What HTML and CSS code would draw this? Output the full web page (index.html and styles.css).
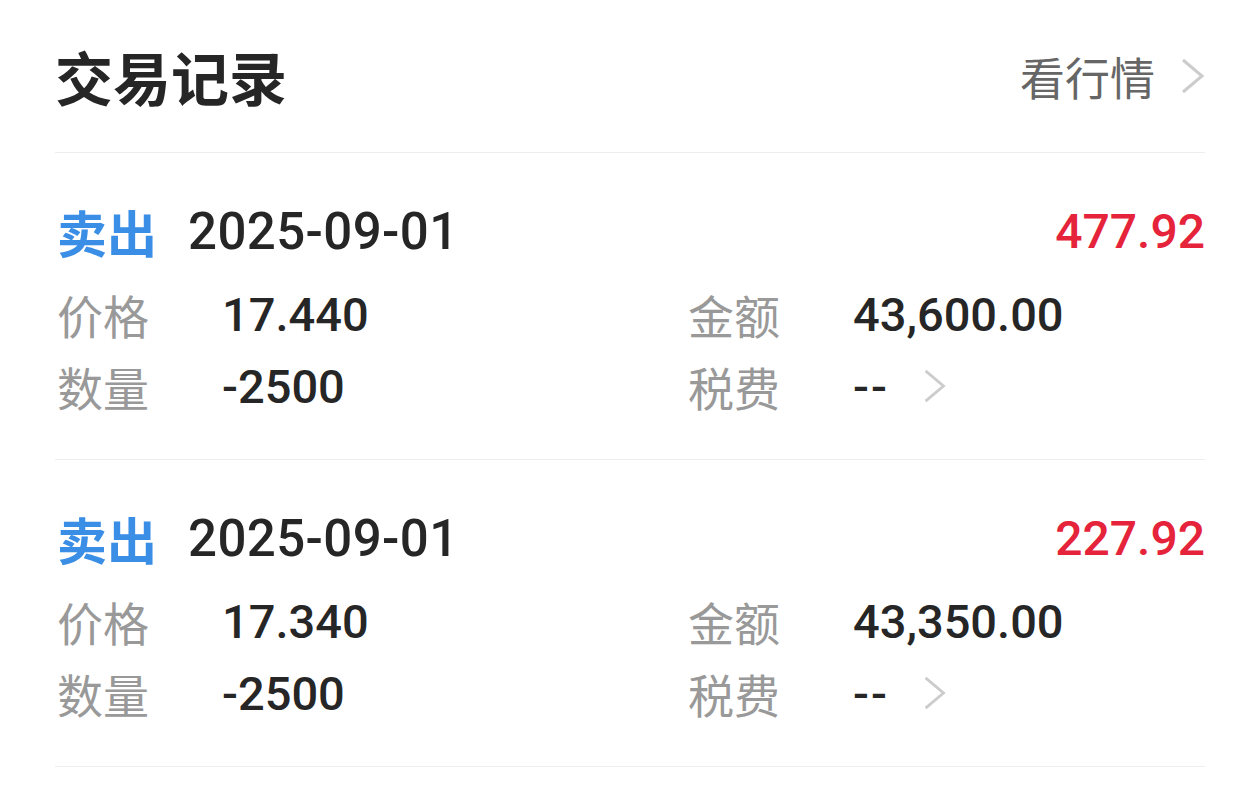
FILE: index.html
```html
<!DOCTYPE html>
<html lang="zh-CN">
<head>
    <meta charset="UTF-8">
    <meta name="viewport" content="width=device-width, initial-scale=1.0">
    <title>交易记录</title>
    <link rel="stylesheet" href="styles.css">
</head>
<body>
    <!-- Header -->
    <div class="header">
        <h1 class="title">交易记录</h1>
        <a href="#" class="more">
            <span>看行情</span>
            <svg class="chevron chevron-lg" viewBox="0 0 24 36"><path d="M2 2 L21 18 L2 34"/></svg>
        </a>
    </div>

    <!-- Trade list -->
    <div class="trade">
        <div class="trade-head">
            <span class="side">卖出</span>
            <span class="date">2025-09-01</span>
            <span class="profit">477.92</span>
        </div>
        <div class="trade-body">
            <div class="field"><span class="label">价格</span><span class="value">17.440</span></div>
            <div class="field"><span class="label">金额</span><span class="value">43,600.00</span></div>
            <div class="field"><span class="label">数量</span><span class="value">-2500</span></div>
            <div class="field"><span class="label">税费</span><span class="value fee">--</span>
                <svg class="chevron" viewBox="0 0 24 36"><path d="M2 2 L21 18 L2 34"/></svg>
            </div>
        </div>
    </div>

    <div class="trade">
        <div class="trade-head">
            <span class="side">卖出</span>
            <span class="date">2025-09-01</span>
            <span class="profit">227.92</span>
        </div>
        <div class="trade-body">
            <div class="field"><span class="label">价格</span><span class="value">17.340</span></div>
            <div class="field"><span class="label">金额</span><span class="value">43,350.00</span></div>
            <div class="field"><span class="label">数量</span><span class="value">-2500</span></div>
            <div class="field"><span class="label">税费</span><span class="value fee">--</span>
                <svg class="chevron" viewBox="0 0 24 36"><path d="M2 2 L21 18 L2 34"/></svg>
            </div>
        </div>
    </div>
</body>
</html>
```

FILE: styles.css
```css
body {
    margin: 0;
    padding: 0 55px;
    background-color: #fff;
    font-family: Roboto, "Noto Sans CJK SC", sans-serif;
    color: #262626;
}

/* Header */
.header {
    height: 152px;
    display: flex;
    align-items: center;
    justify-content: space-between;
    border-bottom: 1px solid #eeeeee;
}

.title {
    margin: 0;
    font-family: "Noto Sans CJK SC", sans-serif;
    font-size: 58px;
    font-weight: bold;
    line-height: 1;
    color: #262626;
}

.more {
    display: flex;
    align-items: center;
    gap: 26px;
    text-decoration: none;
    color: #666;
    font-family: "Noto Sans CJK SC", sans-serif;
    font-size: 45px;
}

.chevron {
    width: 24px;
    height: 34px;
    fill: none;
    stroke: #cccccc;
    stroke-width: 3;
}

.chevron-lg {
    height: 36px;
}

/* Trade rows */
.trade {
    padding: 48px 0 37px;
    border-bottom: 1px solid #eeeeee;
}

.trade-head {
    height: 60px;
    display: flex;
    align-items: center;
}

.side {
    margin-left: 2px;
    font-family: "Noto Sans CJK SC", sans-serif;
    font-size: 50px;
    font-weight: bold;
    color: #3a8ee6;
}

.date {
    margin-left: 31px;
    font-size: 51px;
    font-weight: 500;
    letter-spacing: 0.4px;
}

.profit {
    margin-left: auto;
    font-size: 48px;
    font-weight: 500;
    color: #e5233b;
}

.trade-body {
    margin-top: 17px;
    display: grid;
    grid-template-columns: 631px 1fr;
    grid-auto-rows: 72px;
}

.field {
    display: flex;
    align-items: center;
}

.label {
    width: 165px;
    margin-left: 2px;
    font-family: "Noto Sans CJK SC", sans-serif;
    font-size: 46px;
    color: #999;
}

.value {
    font-size: 47px;
    font-weight: 500;
}

.fee {
    letter-spacing: 2px;
}

.field .chevron {
    margin-left: 34px;
}
```
